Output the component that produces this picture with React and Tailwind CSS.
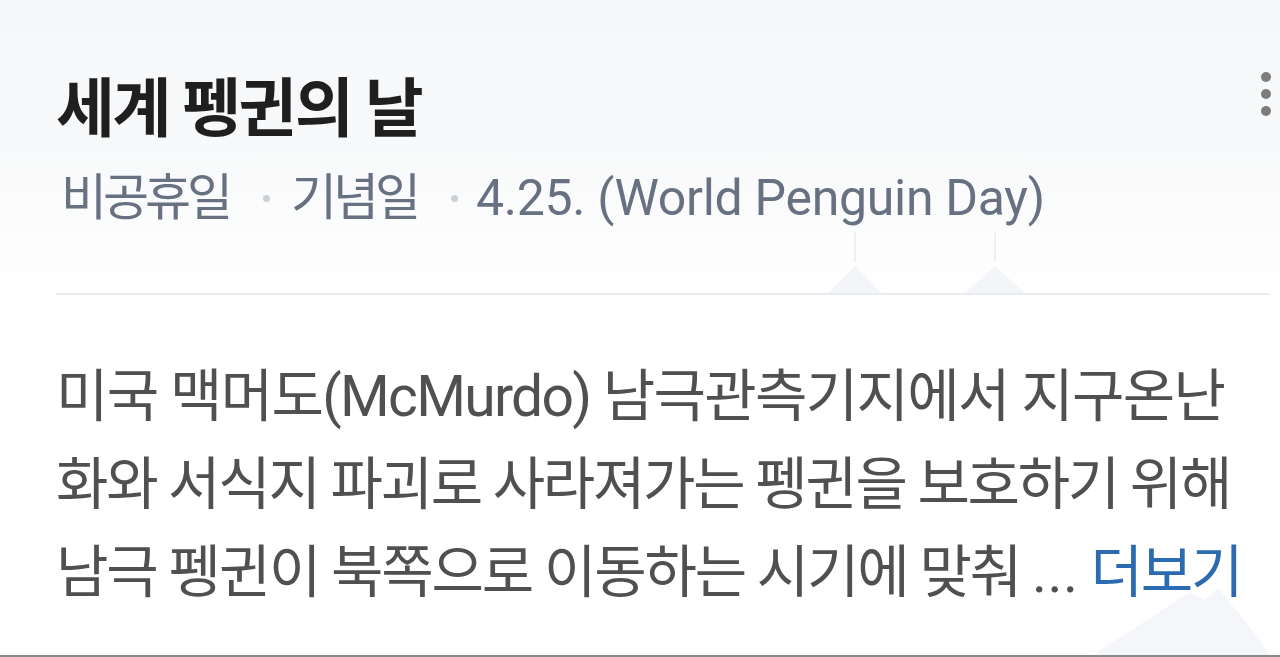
import React from "react";

const KR = { fontFamily: "Roboto, 'Noto Sans CJK KR', 'Noto Sans', sans-serif" };

export default function App() {
  return (
    <div
      className="relative w-[1280px] h-[657px] overflow-hidden bg-[linear-gradient(180deg,#f6f7f9_0px,#f8f9fa_150px,#ffffff_300px)] border-b-2 border-[#8a8a8a]"
      style={KR}
    >
      <svg
        className="absolute inset-0 pointer-events-none"
        width="1280"
        height="657"
        viewBox="0 0 1280 657"
      >
        <line x1="855" y1="232" x2="855" y2="262" stroke="#eef0f3" strokeWidth="2" />
        <line x1="995" y1="232" x2="995" y2="262" stroke="#eef0f3" strokeWidth="2" />
        <path d="M828 293 L855 266 L882 293 Z" fill="#f3f5f8" />
        <path d="M965 293 L995 266 L1025 293 Z" fill="#f3f5f8" />
        <path d="M1090 657 L1190 592 L1205 600 L1218 588 L1260 640 L1270 657 Z" fill="#f5f6f9" />
      </svg>

      <div className="relative flex flex-col pl-[56px] pr-[10px]">
        <div className="flex items-start justify-between pt-[68px]">
          <h1 className="text-[64px] leading-[84px] font-bold text-[#1f1f1f] tracking-[-2.5px]">
            세계 펭귄의 날
          </h1>
          <div className="flex flex-col gap-[7px] pt-[4px] mr-[-1px]">
            <span className="block w-[10px] h-[10px] rounded-full bg-[#7d7d7d]" />
            <span className="block w-[10px] h-[10px] rounded-full bg-[#7d7d7d]" />
            <span className="block w-[10px] h-[10px] rounded-full bg-[#7d7d7d]" />
          </div>
        </div>

        <div className="flex items-center pl-[5px] text-[50px] leading-[60px] text-[#687181] tracking-[-4px] mt-[16px]">
          <span>비공휴일</span>
          <span className="ml-[34px] mr-[21px] block w-[7px] h-[7px] rounded-full bg-[#cdd1d7]" />
          <span>기념일</span>
          <span className="ml-[34px] mr-[18px] block w-[7px] h-[7px] rounded-full bg-[#cdd1d7]" />
          <span className="tracking-[-0.3px]">4.25. (World Penguin Day)</span>
        </div>

        <div className="mt-[65px] border-t-2 border-[#e8ebef]" />

        <div className="pt-[58px] text-[57px] leading-[88px] text-[#505050]">
          <p className="whitespace-nowrap tracking-[-1.7px]">미국 맥머도(McMurdo) 남극관측기지에서 지구온난</p>
          <p className="whitespace-nowrap tracking-[-2.3px]">화와 서식지 파괴로 사라져가는 펭귄을 보호하기 위해</p>
          <p className="whitespace-nowrap tracking-[-2.2px]">
            남극 펭귄이 북쪽으로 이동하는 시기에 맞춰 <span className="tracking-[0.5px]">...</span>{" "}
            <span className="text-[#2c6bb1]">더보기</span>
          </p>
        </div>
      </div>
    </div>
  );
}
